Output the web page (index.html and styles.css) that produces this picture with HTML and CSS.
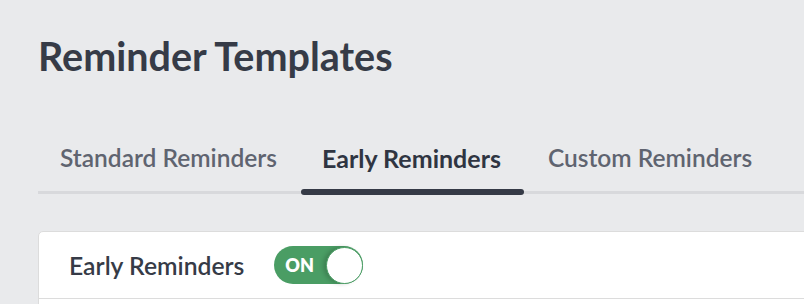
FILE: index.html
```html
<!DOCTYPE html>
<html lang="en">
<head>
  <meta charset="UTF-8" />
  <title>Reminder Templates</title>
  <link rel="stylesheet" href="styles.css">
</head>
<body>
  <main>
    <h1>Reminder Templates</h1>

    <nav class="tabs">
      <a class="tab">Standard Reminders</a>
      <a class="tab active">Early Reminders</a>
      <a class="tab">Custom Reminders</a>
    </nav>

    <div class="card">
      <div class="card-header">
        <span class="card-title">Early Reminders</span>
        <div class="toggle on">
          <span class="toggle-label">ON</span>
          <span class="knob"></span>
        </div>
      </div>
      <div class="card-body"></div>
    </div>
  </main>
</body>
</html>
```

FILE: styles.css
```css
body {
  font-family: Lato, 'Open Sans', sans-serif;
  background-color: #e9eaec;
  margin: 0;
  padding: 0;
  overflow: hidden;
}
main {
  padding: 32px 0 0 38px;
  margin-right: -40px;
}
h1 {
  margin: 0;
  font-size: 39.5px;
  font-weight: 700;
  line-height: 1.2;
  color: #363b47;
}
.tabs {
  display: flex;
  margin-top: 64px;
  border-bottom: 3px solid #d8d9dc;
}
.tab {
  position: relative;
  padding: 0 22px 18px;
  margin-right: 2px;
  font-size: 24.5px;
  font-weight: 600;
  line-height: 1.2;
  color: #5f6470;
  cursor: pointer;
}
.tab.active {
  padding-left: 21px;
  padding-right: 23px;
  font-size: 25px;
  font-weight: 700;
  color: #2f3542;
}
.tab.active::after {
  content: "";
  position: absolute;
  left: 0;
  right: 0;
  bottom: -4px;
  height: 6px;
  border-radius: 3px;
  background: #353a46;
}
.card {
  margin-top: 37px;
  background: white;
  border: 1px solid #dcdcdc;
  border-radius: 5px;
}
.card-header {
  display: flex;
  align-items: center;
  gap: 30px;
  height: 66px;
  padding: 0 30px;
  border-bottom: 1px solid #dcdcdc;
}
.card-title {
  font-size: 24.7px;
  font-weight: 600;
  color: #363b47;
}
.card-body {
  height: 30px;
}
.toggle {
  display: flex;
  align-items: center;
  justify-content: space-between;
  width: 89px;
  height: 38px;
  box-sizing: border-box;
  border-radius: 19px;
  background: #4a9d64;
  padding-left: 11px;
}
.toggle-label {
  font-size: 18px;
  font-weight: 800;
  color: white;
}
.knob {
  width: 37px;
  height: 37px;
  box-sizing: border-box;
  border-radius: 50%;
  background: white;
  border: 1px solid #4a9d64;
  box-shadow: -3px 0 4px rgba(0,0,0,0.18);
}
```
